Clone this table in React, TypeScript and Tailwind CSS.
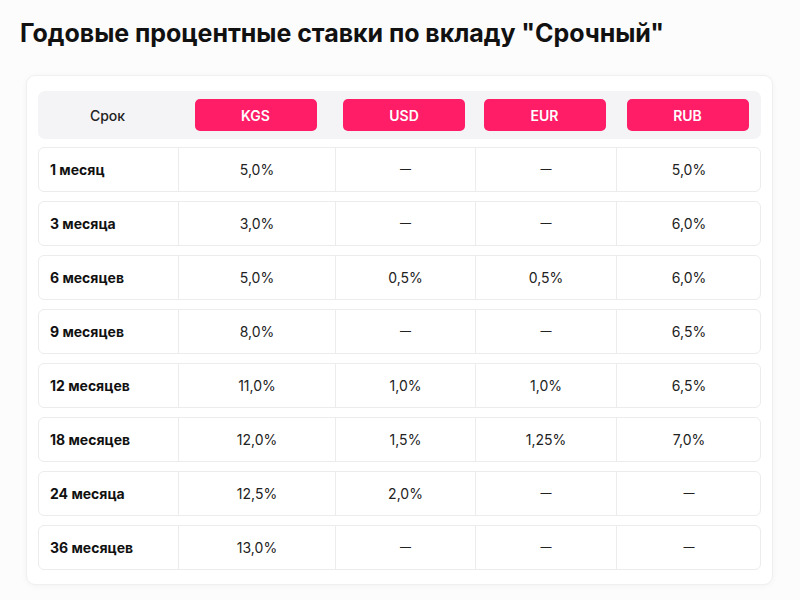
const currencies = ["KGS", "USD", "EUR", "RUB"];

const rows: { term: string; values: string[] }[] = [
  { term: "1 месяц", values: ["5,0%", "—", "—", "5,0%"] },
  { term: "3 месяца", values: ["3,0%", "—", "—", "6,0%"] },
  { term: "6 месяцев", values: ["5,0%", "0,5%", "0,5%", "6,0%"] },
  { term: "9 месяцев", values: ["8,0%", "—", "—", "6,5%"] },
  { term: "12 месяцев", values: ["11,0%", "1,0%", "1,0%", "6,5%"] },
  { term: "18 месяцев", values: ["12,0%", "1,5%", "1,25%", "7,0%"] },
  { term: "24 месяца", values: ["12,5%", "2,0%", "—", "—"] },
  { term: "36 месяцев", values: ["13,0%", "—", "—", "—"] },
];

const cols = "grid grid-cols-[139px_157px_140px_141px_145px]";

const App = () => {
  return (
    <div className="min-h-screen w-[800px] bg-[#fcfcfc] font-['Inter',sans-serif] text-[#141414]">
      <h1 className="pl-[20px] pt-[15px] text-[25px] font-bold leading-[36px] tracking-[-0.05px] text-[#111]">
        Годовые процентные ставки по вкладу "Срочный"
      </h1>

      {/* Rates card */}
      <div className="mx-[26px] mt-[24px] w-[747px] rounded-[9px] border border-[#f0f0f0] bg-white px-[11px] pb-[14px] pt-[15px] shadow-[0_1px_6px_rgba(0,0,0,0.04)]">
        {/* Header */}
        <div className={`${cols} h-[48px] items-center rounded-[7px] bg-[#f4f4f6]`}>
          <span className="text-center text-[14px] font-medium text-[#222]">Срок</span>
          {currencies.map((c) => (
            <div
              key={c}
              className="mx-auto flex h-[32px] w-[122px] items-center justify-center rounded-[5px] bg-[#ff1d68] text-[14px] font-semibold text-white"
            >
              {c}
            </div>
          ))}
        </div>

        {/* Rows */}
        <div className="mt-[8px] flex flex-col gap-[9px]">
          {rows.map((r) => (
            <div
              key={r.term}
              className={`${cols} h-[45px] rounded-[6px] border border-[#ececec]`}
            >
              <div className="flex items-center pl-[11px] text-[14px] font-bold text-[#111]">
                {r.term}
              </div>
              {r.values.map((v, i) => (
                <div
                  key={i}
                  className={`flex items-center justify-center border-l border-[#ececec] text-[#222] ${
                    v === "—" ? "text-[11px]" : "text-[14px]"
                  }`}
                >
                  {v}
                </div>
              ))}
            </div>
          ))}
        </div>
      </div>
    </div>
  );
};

export default App;
